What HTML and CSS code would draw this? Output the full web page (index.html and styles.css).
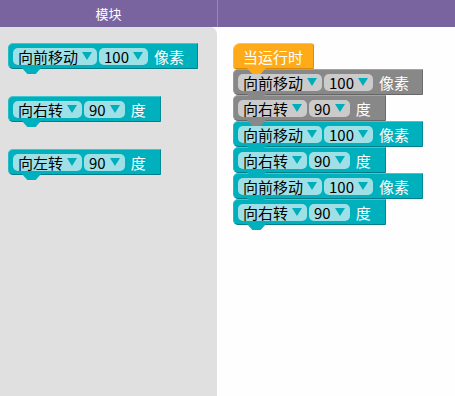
FILE: index.html
```html
<!DOCTYPE html>
<html lang="zh">
<head>
    <meta charset="UTF-8">
    <meta name="viewport" content="width=device-width, initial-scale=1.0">
    <title>积木</title>
    <link rel="stylesheet" href="styles.css">
</head>
<body>
<div class="toolbar">
    <div class="toolbar-title">模块</div>
    <div class="toolbar-rest"></div>
</div>

<div class="workspace">
    <div class="palette">
        <div class="block motion move">
            <span class="pill">向前移动<i class="arrow"></i></span>
            <span class="pill">100<i class="arrow"></i></span>
            <span class="unit">像素</span>
        </div>
        <div class="block motion turn">
            <span class="pill">向右转<i class="arrow"></i></span>
            <span class="pill">90<i class="arrow"></i></span>
            <span class="unit">度</span>
        </div>
        <div class="block motion turn">
            <span class="pill">向左转<i class="arrow"></i></span>
            <span class="pill">90<i class="arrow"></i></span>
            <span class="unit">度</span>
        </div>
    </div>

    <div class="canvas">
        <div class="stack">
            <div class="block hat">当运行时</div>
            <div class="block disabled move">
                <span class="pill">向前移动<i class="arrow"></i></span>
                <span class="pill">100<i class="arrow"></i></span>
                <span class="unit">像素</span>
            </div>
            <div class="block disabled turn">
                <span class="pill">向右转<i class="arrow"></i></span>
                <span class="pill">90<i class="arrow"></i></span>
                <span class="unit">度</span>
            </div>
            <div class="block motion move">
                <span class="pill">向前移动<i class="arrow"></i></span>
                <span class="pill">100<i class="arrow"></i></span>
                <span class="unit">像素</span>
            </div>
            <div class="block motion turn">
                <span class="pill">向右转<i class="arrow"></i></span>
                <span class="pill">90<i class="arrow"></i></span>
                <span class="unit">度</span>
            </div>
            <div class="block motion move">
                <span class="pill">向前移动<i class="arrow"></i></span>
                <span class="pill">100<i class="arrow"></i></span>
                <span class="unit">像素</span>
            </div>
            <div class="block motion turn">
                <span class="pill">向右转<i class="arrow"></i></span>
                <span class="pill">90<i class="arrow"></i></span>
                <span class="unit">度</span>
            </div>
        </div>
    </div>
</div>
</body>
</html>
```

FILE: styles.css
```css
* {
    box-sizing: border-box;
}

body {
    margin: 0;
    width: 455px;
    height: 396px;
    overflow: hidden;
    font-family: "Noto Sans CJK SC", "Noto Sans", sans-serif;
    background-color: #fefefe;
}

.toolbar {
    display: flex;
    height: 27px;
    background-color: #7a64a0;
}

.toolbar-title {
    width: 218px;
    border-right: 1px solid #9a8ab8;
    color: #fff;
    font-size: 13px;
    line-height: 27px;
    text-align: center;
}

.toolbar-rest {
    flex: 1;
}

.workspace {
    display: flex;
    height: 369px;
}

.palette {
    width: 217px;
    background-color: #e0e0e0;
    border-top-right-radius: 7px;
    padding: 16px 0 0 8px;
    display: flex;
    flex-direction: column;
    align-items: flex-start;
    gap: 27px;
}

.canvas {
    flex: 1;
    padding: 16px 0 0 16px;
}

.stack {
    display: flex;
    flex-direction: column;
    align-items: flex-start;
}

.block {
    position: relative;
    height: 26px;
    display: flex;
    align-items: center;
    gap: 2px;
    padding: 0 0 0 4px;
    font-size: 15px;
    border: 1px solid;
    border-radius: 5px 0 0 5px;
}

.block::after {
    content: "";
    position: absolute;
    left: 13px;
    bottom: -6px;
    width: 19px;
    height: 6px;
    background-color: inherit;
    clip-path: polygon(0 0, 100% 0, 72% 100%, 28% 100%);
    z-index: 2;
}

.block.move {
    width: 190px;
}

.block.turn {
    width: 153px;
}

.motion {
    background-color: #00b0bd;
    border-color: #3fc8d2 #008a96 #007d89 #22bcc7;
}

.disabled {
    background-color: #888888;
    border-color: #a4a4a4 #6c6c6c #666666 #9a9a9a;
}

.disabled .pill {
    background-color: #cbcbcb;
}

.hat {
    width: 81px;
    background-color: #ffab19;
    border-color: #ffc254 #e08f00 #d98a00 #ffbb44;
    border-radius: 7px 3px 0 3px;
    color: #fff;
    padding-left: 9px;
}

.pill {
    display: flex;
    align-items: center;
    gap: 4px;
    height: 17px;
    padding: 0 5px 0 5px;
    background-color: #9ee0e6;
    border-radius: 5px;
    color: #000;
    line-height: 17px;
}

.arrow {
    width: 0;
    height: 0;
    border-left: 5px solid transparent;
    border-right: 5px solid transparent;
    border-top: 8px solid #00aebb;
}

.unit {
    margin-left: 4px;
    color: #fff;
}
```
